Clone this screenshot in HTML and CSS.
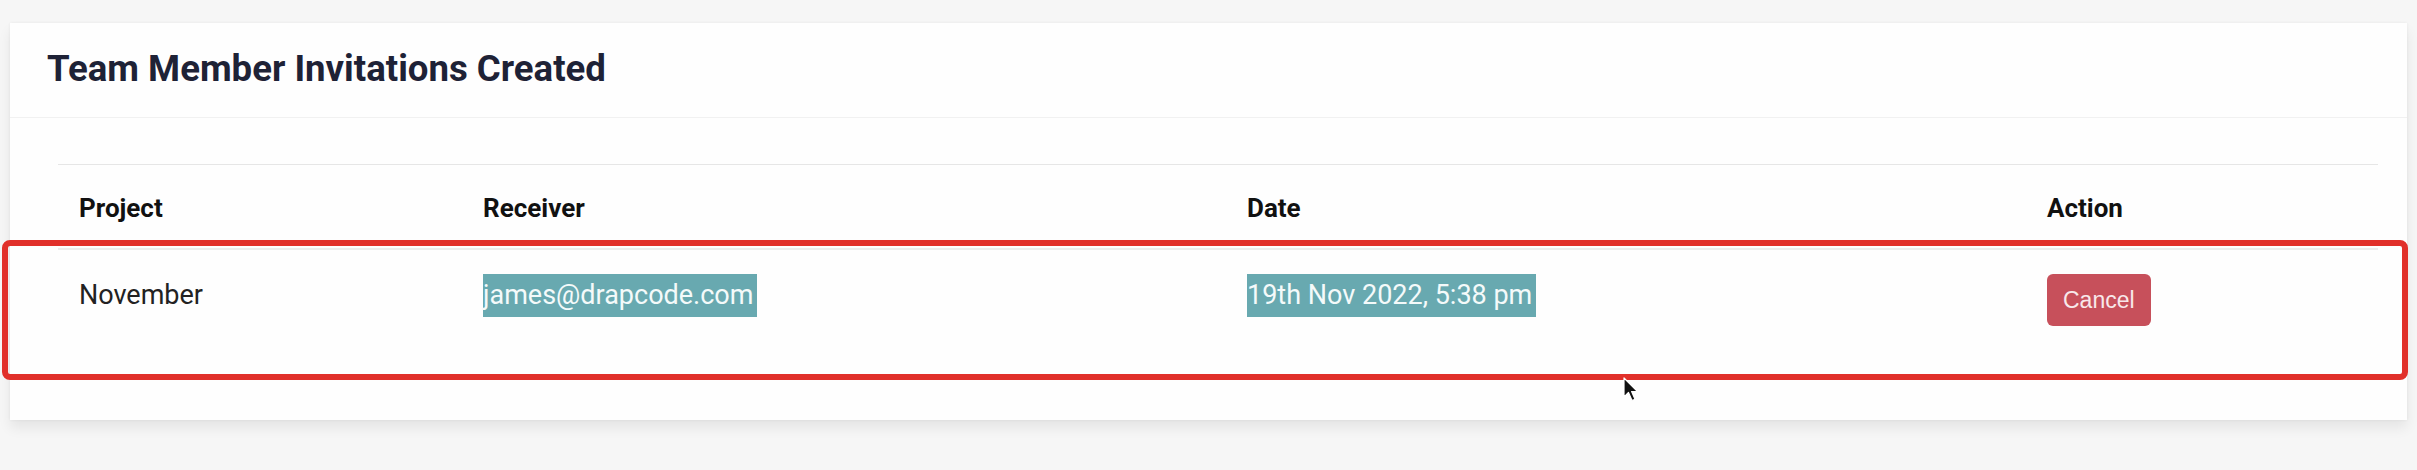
FILE: index.html
```html
<!DOCTYPE html>
<html lang="en">
  <head>
    <meta charset="UTF-8" />
    <meta name="viewport" content="width=device-width, initial-scale=1.0" />
    <title>Team Member Invitations</title>
    <link rel="stylesheet" href="styles.css">
  </head>
  <body>
    <main class="page">
      <section class="card">
        <div class="card-header">
          <h2>Team Member Invitations Created</h2>
        </div>
        <div class="card-body">
          <table class="invitations">
            <colgroup>
              <col class="col-project" />
              <col class="col-receiver" />
              <col class="col-date" />
              <col class="col-action" />
            </colgroup>
            <thead>
              <tr>
                <th>Project</th>
                <th>Receiver</th>
                <th>Date</th>
                <th>Action</th>
              </tr>
            </thead>
            <tbody>
              <tr>
                <td><span class="cell-text">November</span></td>
                <td><span class="cell-text selected">james@drapcode.com</span></td>
                <td><span class="cell-text selected">19th Nov 2022, 5:38 pm</span></td>
                <td><button class="btn-cancel" type="button">Cancel</button></td>
              </tr>
            </tbody>
          </table>
        </div>
      </section>

      <!-- annotation over the row -->
      <div class="highlight-box"></div>
      <svg class="cursor" width="16" height="26" viewBox="0 0 16 26">
        <path d="M1 1 L1 20 L5.5 15.5 L9 23.5 L12 22.2 L8.6 14.5 L14.5 14.5 Z" fill="#111" stroke="#fff" stroke-width="1.2" stroke-linejoin="round" />
      </svg>
    </main>
  </body>
</html>
```

FILE: styles.css
```css
:root {
  --title-color: #1e2236;
  --text-color: #222;
  --line-color: #ececec;
  --select-color: #68a9b0;
  --danger-color: #c7505b;
  --mark-color: #e1302a;
}

html {
  box-sizing: border-box;
}

*,
*::before,
*::after {
  box-sizing: border-box;
}

body {
  margin: 0;
  background-color: #f6f6f6;
  color: var(--text-color);
  font-family: Roboto, "Liberation Sans", sans-serif;
}

.page {
  position: relative;
  padding: 23px 10px 0 10px;
  height: 470px;
}

.card {
  background-color: #fefefe;
  box-shadow: 0 0 3px rgba(0, 0, 0, 0.06), 0 8px 12px rgba(0, 0, 0, 0.07);
}

.card-header {
  padding: 24px 37px 27px;
  border-bottom: 1px solid #f1f1f1;
}

.card-header h2 {
  margin: 0;
  font-size: 36.6px;
  line-height: 43px;
  font-weight: 700;
  color: var(--title-color);
}

.card-body {
  padding: 46px 29px 50px 48px;
}

.invitations {
  width: 100%;
  table-layout: fixed;
  border-collapse: collapse;
  border-top: 1px solid #e6e6e6;
}

.col-project {
  width: 404px;
}
.col-receiver {
  width: 764px;
}
.col-date {
  width: 800px;
}
.col-action {
  width: 352px;
}

.invitations th {
  padding: 24px 21px 20px;
  text-align: left;
  font-size: 26px;
  line-height: 39px;
  font-weight: 700;
  color: #111;
  border-bottom: 2px solid var(--line-color);
}

.invitations td {
  padding: 24px 21px 44px;
  vertical-align: top;
  font-size: 27px;
  line-height: 43px;
}

.cell-text {
  display: inline-block;
  height: 43px;
}

.selected {
  padding-right: 4px;
  background-color: var(--select-color);
  color: #f4fafa;
}

.btn-cancel {
  display: block;
  margin: 0;
  padding: 13px 16px;
  border: none;
  border-radius: 6px;
  background-color: var(--danger-color);
  color: #f8e8ea;
  font-family: "Liberation Sans", Arial, sans-serif;
  font-size: 23px;
  line-height: 26px;
}

.highlight-box {
  position: absolute;
  left: 2px;
  top: 240px;
  width: 2406px;
  height: 140px;
  border: 6px solid var(--mark-color);
  border-radius: 8px;
  pointer-events: none;
}

.cursor {
  position: absolute;
  left: 1623px;
  top: 377px;
}
```
